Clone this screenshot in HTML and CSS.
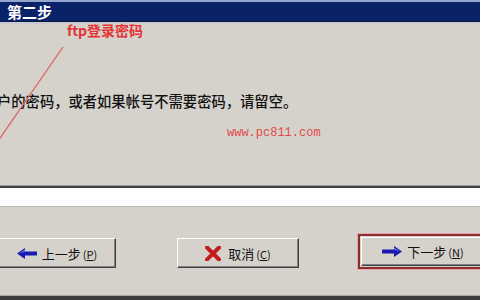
FILE: index.html
```html
<!DOCTYPE html>
<html lang="zh">
<head>
<meta charset="utf-8">
<title>第二步</title>
<link rel="stylesheet" href="styles.css">
</head>
<body>
<div class="window">
  <div class="titlebar"><span class="title">第二步</span></div>
  <div class="panel">
    <p class="desc">户的密码，或者如果帐号不需要密码，请留空。</p>
    <span class="note note-ftp">ftp登录密码</span>
    <svg class="note-line" width="80" height="150" viewBox="0 0 80 150">
      <line x1="63" y1="23" x2="-2" y2="117" stroke="#e06060" stroke-width="1.3"/>
    </svg>
    <span class="note note-url">www.pc811.com</span>
  </div>
  <div class="field"></div>
  <div class="buttons">
    <button class="btn btn-prev">
      <svg class="ico" width="20" height="11" viewBox="0 0 20 11"><polygon points="0,5.5 8,0 8,3.5 20,3.5 20,7.5 8,7.5 8,11" fill="#1a1ab0"/><polygon points="2,5.5 8,1.6 8,3.5" fill="#6f7ee8"/></svg>
      <span>上一步<span class="acc">(<u>P</u>)</span></span>
    </button>
    <button class="btn btn-cancel">
      <svg class="ico" width="16" height="15" viewBox="0 0 16 15"><path d="M2 1.5 L14 13.5 M14 1.5 L2 13.5" stroke="#c41c1c" stroke-width="4" stroke-linecap="square"/></svg>
      <span>取消<span class="acc">(<u>C</u>)</span></span>
    </button>
    <div class="focus-ring">
      <button class="btn btn-next">
        <svg class="ico" width="20" height="11" viewBox="0 0 20 11"><polygon points="20,5.5 12,0 12,3.5 0,3.5 0,7.5 12,7.5 12,11" fill="#1a1ab0"/><polygon points="18,5.5 12,1.6 12,3.5" fill="#6f7ee8"/></svg>
        <span>下一步<span class="acc">(<u>N</u>)</span></span>
      </button>
    </div>
  </div>
  <div class="bottom-edge"></div>
</div>
</body>
</html>
```
FILE: styles.css
```css
html, body {
  margin: 0;
  padding: 0;
}
body {
  width: 480px;
  height: 300px;
  overflow: hidden;
  background: #d5d2cc;
  font-family: "Noto Sans CJK SC", "Liberation Sans", sans-serif;
}
.window {
  display: flex;
  flex-direction: column;
  height: 300px;
}
.titlebar {
  height: 19px;
  border-top: 2px solid #93a6cc;
  border-bottom: 1px solid #061a46;
  box-shadow: 0 2px 0 #c9cad2;
  background: #0a2268;
  display: flex;
  align-items: center;
  padding-left: 7px;
}
.title {
  color: #fff;
  font-size: 15px;
  font-weight: 700;
  line-height: 15px;
}
.panel {
  position: relative;
  height: 161px;
  margin-top: 2px;
}
.desc {
  margin: 68px 0 0 -3px;
  font-size: 14.3px;
  line-height: 18px;
  font-weight: 500;
  color: #111;
  white-space: nowrap;
}
.note {
  position: absolute;
  white-space: nowrap;
}
.note-ftp {
  left: 67px;
  top: -3px;
  color: #e43434;
  font-size: 14px;
  font-weight: 700;
  line-height: 18px;
}
.note-line {
  position: absolute;
  left: 0;
  top: 0;
}
.note-url {
  left: 227px;
  top: 102px;
  font-family: "Liberation Mono", monospace;
  font-size: 12px;
  line-height: 14px;
  color: #e24a4a;
}
.field {
  height: 20px;
  background: #fff;
  border-top: 1px solid #9c9c9c;
  box-shadow: inset 0 2px 0 #404040;
  border-bottom: 1px solid #bcbab4;
}
.buttons {
  flex: 1;
  display: flex;
  align-items: flex-start;
  padding-top: 31px;
  margin-left: -6px;
}
.btn {
  flex-shrink: 0;
  height: 30px;
  width: 122px;
  box-sizing: border-box;
  background: #d5d2cc;
  border: 1px solid;
  border-color: #ffffff #404040 #404040 #ffffff;
  box-shadow: inset -1px -1px 0 #808080;
  display: flex;
  align-items: center;
  justify-content: center;
  gap: 5px;
  padding: 0;
  font-family: "Noto Sans CJK SC", "Liberation Sans", sans-serif;
  font-size: 13px;
  color: #111;
}
.btn-prev {
  margin-right: 61px;
  padding-left: 4px;
}
.btn-cancel {
  margin-right: 59px;
  gap: 7px;
}
.acc {
  font-size: 11px;
  margin-left: 2px;
}
.ico {
  display: block;
  flex-shrink: 0;
}
.focus-ring {
  flex-shrink: 0;
  margin-top: -4px;
  padding: 1px;
  border: 2px solid #8c2c2c;
  box-shadow: 0 0 0 1px #e6a8a8;
}
.btn-next {
  height: 29px;
  width: 124px;
}
.bottom-edge {
  height: 4px;
  background: #3c3c3c;
  border-top: 1px solid #a8a8a8;
}
```
